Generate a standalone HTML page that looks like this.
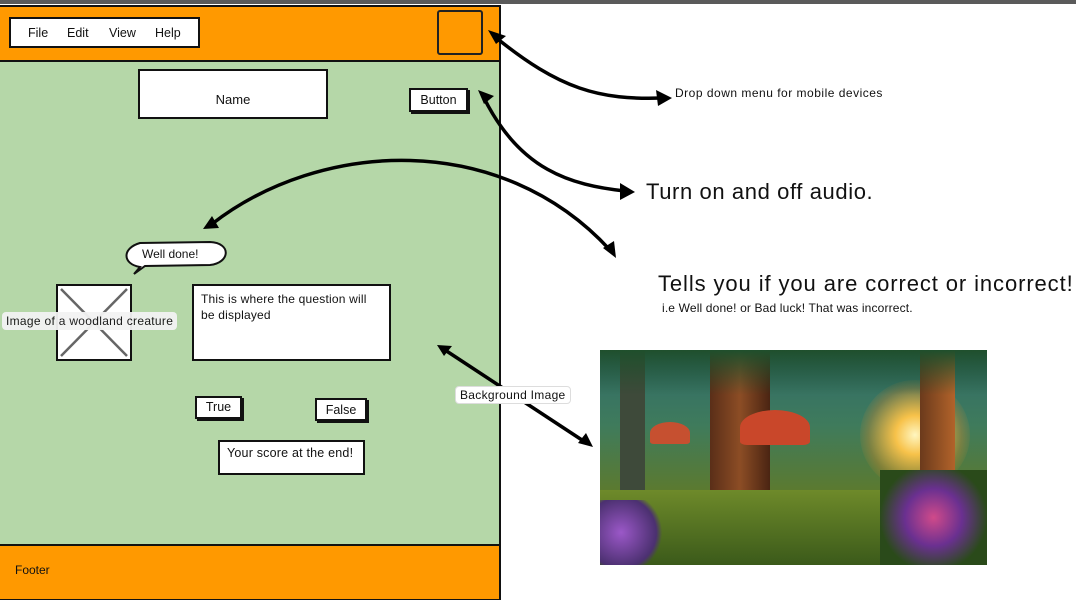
<!DOCTYPE html>
<html><head><style>
body{margin:0;width:1076px;height:601px;background:#fff;position:relative;overflow:hidden;font-family:"Liberation Sans",sans-serif;color:#111}
.a{position:absolute}
.box{position:absolute;background:#fff;border:2px solid #111;box-sizing:border-box;box-shadow:2px 2px 0 #111}
</style></head><body>
<div class="a" style="left:0;top:0;width:1076px;height:4px;background:#5a5a5a"></div>
<div class="a" style="left:-2px;top:5px;width:503px;height:595px;border:2px solid #111;box-sizing:border-box;background:#b5d7a8"></div>
<div class="a" style="left:0;top:7px;width:499px;height:53px;background:#ff9900;border-bottom:2px solid #111"></div>
<div class="a" style="left:0;top:544px;width:499px;height:53px;background:#ff9900;border-top:2px solid #111"></div>
<div class="a" style="left:15px;top:563px;font-size:12px">Footer</div>
<div class="box" style="left:9px;top:17px;width:191px;height:31px;box-shadow:none;font-size:12.5px"><span class="a" style="left:17px;top:7px">File</span><span class="a" style="left:56px;top:7px">Edit</span><span class="a" style="left:98px;top:7px">View</span><span class="a" style="left:144px;top:7px">Help</span></div>
<div class="a" style="left:437px;top:10px;width:46px;height:45px;border:2px solid #222;border-radius:3px;box-sizing:border-box"></div>
<div class="box" style="left:138px;top:69px;width:190px;height:50px;box-shadow:none;text-align:center;line-height:58px;font-size:13px">Name</div>
<div class="box" style="left:409px;top:88px;width:59px;height:24px;font-size:12.5px;text-align:center;line-height:20px">Button</div>
<svg class="a" style="left:0;top:0" width="1076" height="601">
<path d="M140,267 C122,264 122,248 140,243 L210,242 C232,243 230,263 210,265 L145,266 L134,274 Z" fill="#fff" stroke="#111" stroke-width="2"/>
<g fill="none" stroke="#000" stroke-width="3.5">
<path d="M494,36 C560,90 600,100 662,98"/>
<path d="M484,98 C520,170 570,185 625,191"/>
<path d="M212,224 C320,140 500,130 610,250"/>
<path d="M445,350 L585,442"/>
</g>
<g fill="#000">
<polygon points="488,30 506,36 496,44"/><polygon points="672,98 656,90 658,106"/>
<polygon points="478,90 494,96 484,104"/><polygon points="635,192 620,183 620,200"/>
<polygon points="203,229 212,216 219,228"/><polygon points="616,258 603,248 614,241"/>
<polygon points="437,345 452,346 444,356"/><polygon points="593,447 578,443 586,433"/>
</g>
</svg>
<div class="a" style="left:142px;top:247px;font-size:12px">Well done!</div>
<div class="box" style="left:56px;top:284px;width:76px;height:77px;box-shadow:none"></div>
<svg class="a" style="left:58px;top:286px" width="72" height="73"><path d="M3,3 L69,70 M69,3 L3,70" stroke="#666" stroke-width="2.5"/></svg>
<div class="a" style="left:2px;top:312px;background:#f3f3f3;border-radius:4px;padding:2px 4px;font-size:12px;letter-spacing:0.3px;opacity:.95">Image of a woodland creature</div>
<div class="box" style="left:192px;top:284px;width:199px;height:77px;box-shadow:none;font-size:12px;padding:5px 7px;line-height:16px;letter-spacing:0.2px">This is where the question will be displayed</div>
<div class="box" style="left:195px;top:396px;width:47px;height:23px;font-size:12.5px;text-align:center;line-height:19px">True</div>
<div class="box" style="left:315px;top:398px;width:52px;height:23px;font-size:12.5px;text-align:center;line-height:21px">False</div>
<div class="box" style="left:218px;top:440px;width:147px;height:35px;box-shadow:none;font-size:12.5px;padding:4px 7px;letter-spacing:0.2px">Your score at the end!</div>
<div class="a" style="left:455px;top:386px;background:#fff;border:1px solid #ddd;border-radius:4px;padding:1px 4px;font-size:12px;letter-spacing:0.3px">Background Image</div>
<div class="a" style="left:675px;top:86px;font-size:12px;letter-spacing:0.5px">Drop down menu for mobile devices</div>
<div class="a" style="left:646px;top:179px;font-size:22px;letter-spacing:0.6px">Turn on and off audio.</div>
<div class="a" style="left:658px;top:271px;font-size:22px;letter-spacing:0.9px;white-space:nowrap">Tells you if you are correct or incorrect!</div>
<div class="a" style="left:662px;top:301px;font-size:12px;letter-spacing:0.15px">i.e Well done! or Bad luck! That was incorrect.</div>
<div class="a" style="left:600px;top:350px;width:387px;height:215px;overflow:hidden;background:linear-gradient(180deg,#2f6a6a 0%,#3f7b5c 35%,#5b7a30 65%,#3d5a1c 100%)">
<div class="a" style="left:260px;top:30px;width:110px;height:110px;border-radius:50%;background:radial-gradient(circle,#fff6c0 0%,#f7c24a 25%,rgba(230,140,40,.3) 60%,transparent 75%)"></div>
<div class="a" style="left:110px;top:0;width:60px;height:170px;background:linear-gradient(90deg,#5a2e18,#8c4d25,#4a2412)"></div>
<div class="a" style="left:20px;top:0;width:25px;height:150px;background:#3e4a3a"></div>
<div class="a" style="left:320px;top:0;width:35px;height:170px;background:linear-gradient(90deg,#6b3a1c,#b2632a)"></div>
<div class="a" style="left:0;top:0;width:387px;height:45px;background:linear-gradient(180deg,#1f4f2c,rgba(40,90,50,0))"></div>
<div class="a" style="left:140px;top:60px;width:70px;height:35px;border-radius:50% 50% 10% 10%;background:#c9472a"></div>
<div class="a" style="left:50px;top:72px;width:40px;height:22px;border-radius:50% 50% 10% 10%;background:#c65030"></div>
<div class="a" style="left:0;top:140px;width:387px;height:75px;background:linear-gradient(180deg,#6e8a2a,#3b5a1a)"></div>
<div class="a" style="left:0;top:150px;width:70px;height:65px;background:radial-gradient(circle at 30% 50%,#9b58c8,#4b3070 60%,transparent 70%)"></div>
<div class="a" style="left:280px;top:120px;width:107px;height:95px;background:radial-gradient(circle at 50% 50%,#d04a8a,#6a3090 40%,#2a4a1a 75%)"></div>
</div>
</body></html>
